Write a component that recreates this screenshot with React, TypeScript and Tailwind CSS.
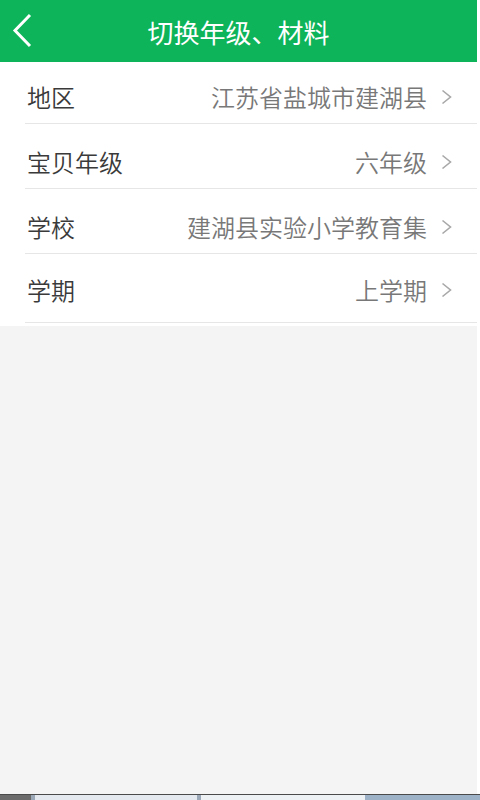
import React from "react";

const rows = [
  { label: "地区", value: "江苏省盐城市建湖县", h: "h-[62px]", pt: "pt-[8px]" },
  { label: "宝贝年级", value: "六年级", h: "h-[65px]", pt: "pt-[12px]" },
  { label: "学校", value: "建湖县实验小学教育集", h: "h-[65px]", pt: "pt-[12px]" },
  { label: "学期", value: "上学期", h: "h-[69px]", pt: "pt-[3px]" },
];

function Chevron() {
  return (
    <svg width="12" height="18" viewBox="0 0 12 18" className="ml-[13px] shrink-0">
      <polyline points="2.5,2.5 10.5,9 2.5,15.5" fill="none" stroke="#a8a8a8" strokeWidth="1.6" />
    </svg>
  );
}

export default function App() {
  return (
    <div
      className="w-[480px] h-[800px] flex flex-col bg-[#f4f4f4] overflow-hidden"
      style={{ fontFamily: '"Noto Sans CJK SC", "Noto Sans", sans-serif' }}
    >
      <div className="flex flex-1 min-h-0">
        <div className="w-[477px] flex flex-col">
          <div className="h-[62px] bg-[#0db45a] relative flex items-center justify-center shrink-0">
            <svg width="24" height="36" viewBox="0 0 24 36" className="absolute left-[11px] top-[13px]">
              <polyline points="19,2 4,17.5 19,33" fill="none" stroke="#ffffff" strokeWidth="3" />
            </svg>
            <span className="text-white text-[26px] leading-none pt-[2px]">切换年级、材料</span>
          </div>
          <div className="bg-white pl-[25px] pb-[3px] shrink-0">
            {rows.map((r) => (
              <div
                key={r.label}
                className={`${r.h} border-b border-[#e6e6e6] flex items-center pr-[25px] pl-[2px]`}
              >
                <div className={`flex items-center w-full ${r.pt}`}>
                  <span className="text-[#3a3a3a] text-[24px] font-[350] leading-none flex-1">{r.label}</span>
                  <span className="text-[#787878] text-[24px] font-[350] leading-none">{r.value}</span>
                  <Chevron />
                </div>
              </div>
            ))}
          </div>
          <div className="flex-1 bg-[#f4f4f4]" />
        </div>
        <div className="flex-1 bg-white" />
      </div>
      <div className="h-[6px] flex shrink-0 border-t border-[#4a4a4a]">
        <div className="w-[31px] bg-[#6b6b6b]" />
        <div className="w-[4px] bg-[#9aa8b8]" />
        <div className="w-[162px] bg-[#e3e9ef]" />
        <div className="w-[4px] bg-[#9aa8b8]" />
        <div className="w-[164px] bg-[#eef1f4]" />
        <div className="flex-1 bg-[#9db2c7]" />
      </div>
    </div>
  );
}
